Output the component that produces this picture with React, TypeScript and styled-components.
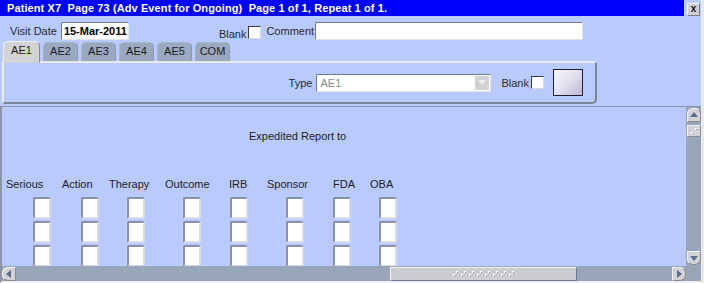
import styled, { createGlobalStyle } from 'styled-components';

const GlobalStyle = createGlobalStyle`
  html, body {
    margin: 0;
    padding: 0;
    background: #e9e9ec;
  }
  * {
    box-sizing: border-box;
  }
`;

const Window = styled.div`
  display: flex;
  flex-direction: column;
  width: 701px;
  height: 283px;
  background: #b9cafe;
  font-family: 'Liberation Sans', Arial, sans-serif;
  font-size: 11px;
  color: #222;
  overflow: hidden;
`;

const TitleRow = styled.div`
  display: flex;
  align-items: flex-start;
  height: 17px;
`;

const TitleBar = styled.div`
  flex: 1;
  height: 16px;
  line-height: 16px;
  padding-left: 7px;
  background: #0000ff;
  color: #fff;
  font-weight: bold;
  font-size: 11px;
  letter-spacing: 0.1px;
  white-space: pre;
`;

const CloseButton = styled.div`
  width: 13px;
  height: 13px;
  margin: 3px 1px 0 3px;
  background: #cfcfd4;
  border: 1px solid;
  border-color: #f4f4f4 #7a7a80 #7a7a80 #f4f4f4;
  font-size: 10px;
  font-weight: bold;
  line-height: 10px;
  text-align: center;
  color: #111;
`;

const HeaderRow = styled.div`
  display: flex;
  align-items: center;
  height: 18px;
  margin-top: 5px;
  padding-left: 10px;
`;

const Label = styled.span<{ $ml?: number; $mt?: number }>`
  margin-left: ${(p) => p.$ml ?? 0}px;
  margin-top: ${(p) => p.$mt ?? 0}px;
  color: #2a2a2a;
  white-space: nowrap;
`;

const TextBox = styled.div<{ $w: number; $ml?: number; $muted?: boolean }>`
  width: ${(p) => p.$w}px;
  height: 18px;
  margin-left: ${(p) => p.$ml ?? 0}px;
  padding-left: 2px;
  background: #fff;
  border: 1px solid;
  border-color: #6e7890 #e4e4e4 #e4e4e4 #6e7890;
  border-radius: 2px;
  line-height: 16px;
  font-size: 11px;
  color: ${(p) => (p.$muted ? '#8a8a8a' : '#000')};
  font-weight: ${(p) => (p.$muted ? 'normal' : 'bold')};
`;

const Check = styled.div<{ $ml?: number; $mt?: number }>`
  width: 13px;
  height: 13px;
  margin-left: ${(p) => p.$ml ?? 0}px;
  margin-top: ${(p) => p.$mt ?? 0}px;
  background: #fff;
  border: 1px solid;
  border-color: #3a3a3a #d8d8d8 #d8d8d8 #3a3a3a;
`;

const TabStrip = styled.div`
  display: flex;
  align-items: flex-end;
  gap: 3px;
  height: 21px;
  padding-left: 3px;
`;

const Tab = styled.div<{ $active?: boolean }>`
  width: ${(p) => (p.$active ? 37 : 35)}px;
  height: ${(p) => (p.$active ? 22 : 19)}px;
  margin-bottom: ${(p) => (p.$active ? -2 : 0)}px;
  background: ${(p) => (p.$active ? '#d3d3d6' : '#9aa8c0')};
  border: 1px solid;
  border-color: ${(p) => (p.$active ? '#f0f0f0 #8a8a8a transparent #f0f0f0' : '#a8b4c8 #8d9ab0 transparent #a8b4c8')};
  border-radius: 5px 5px 0 0;
  text-align: center;
  line-height: 17px;
  color: #1c1c1c;
  position: relative;
  z-index: ${(p) => (p.$active ? 2 : 0)};
`;

const Panel = styled.div`
  display: flex;
  align-items: center;
  justify-content: flex-end;
  width: 595px;
  height: 43px;
  margin-left: 2px;
  padding-right: 12px;
  border: 2px solid;
  border-color: #e8eaf2 #7c8596 #7c8596 #e8eaf2;
  border-radius: 0 4px 5px 3px;
`;

const Select = styled(TextBox)`
  position: relative;
  padding-left: 3px;
`;

const SelectArrow = styled.div`
  position: absolute;
  top: 1px;
  right: 1px;
  width: 14px;
  height: 14px;
  background: #d2d2d4;
  display: flex;
  align-items: center;
  justify-content: center;
`;

const ColorSwatch = styled.div`
  width: 30px;
  height: 27px;
  margin-left: 9px;
  border: 1px solid #1e1e2a;
  background: linear-gradient(135deg, #f7f6fc 0%, #e6e3f0 45%, #bdb5d0 100%);
`;

const ScrollArea = styled.div`
  flex: 1;
  display: grid;
  grid-template-columns: 1fr 15px;
  grid-template-rows: 1fr 15px;
  margin-top: 2px;
  border-top: 1px solid #8c95a6;
  border-left: 2px solid #8c95a6;
  border-bottom: 2px solid #eef0f6;
  min-height: 0;
`;

const Content = styled.div`
  overflow: hidden;
  padding-top: 23px;
`;

const SectionTitle = styled.div`
  padding-left: 247px;
  line-height: 13px;
  color: #222;
`;

const Columns = styled.div`
  display: flex;
  margin-top: 35px;
  padding-left: 4px;
`;

const Column = styled.div<{ $w?: number }>`
  display: flex;
  flex-direction: column;
  width: ${(p) => (p.$w ? `${p.$w}px` : 'auto')};
`;

const ColHeader = styled.div`
  line-height: 13px;
  height: 13px;
  color: #222;
  white-space: nowrap;
`;

const BoxStack = styled.div<{ $offset: number }>`
  display: flex;
  flex-direction: column;
  gap: 2px;
  margin-top: 6px;
  margin-left: ${(p) => p.$offset}px;
`;

const Box = styled.div`
  width: 18px;
  height: 22px;
  background: #fff;
  border: 2px solid;
  border-color: #8792a6 #d9dbe2 #d9dbe2 #8792a6;
  border-radius: 2px;
`;

const VScroll = styled.div`
  display: flex;
  flex-direction: column;
  align-items: center;
  background: #99a5b9;
  padding: 1px 0;
`;

const HScroll = styled.div`
  display: flex;
  align-items: center;
  background: #99a5b9;
`;

const Corner = styled.div`
  background: #99a5b9;
`;

const ArrowButton = styled.div<{ $dir: 'up' | 'down' | 'left' | 'right' }>`
  width: 14px;
  height: 14px;
  flex-shrink: 0;
  background: #d2d3d6;
  border: 1px solid;
  border-color: #f2f2f2 #8c8c90 #8c8c90 #f2f2f2;
  border-radius: ${(p) =>
    p.$dir === 'up' ? '6px 6px 1px 1px' : p.$dir === 'down' ? '1px 1px 6px 6px' : p.$dir === 'left' ? '6px 1px 1px 6px' : '1px 6px 6px 1px'};
  display: flex;
  align-items: center;
  justify-content: center;
`;

const Spacer = styled.div`
  flex: 1;
`;

const VThumb = styled.div`
  width: 14px;
  height: 12px;
  margin-top: 3px;
  background: #d2d3d6;
  border: 1px solid;
  border-color: #f2f2f2 #8c8c90 #8c8c90 #f2f2f2;
  display: flex;
  align-items: center;
  justify-content: center;
`;

const HThumb = styled.div`
  width: 187px;
  height: 14px;
  margin-left: 374px;
  background: #cbccd0;
  border: 1px solid;
  border-color: #f4f4f4 #6e7890 #6e7890 #f4f4f4;
  display: flex;
  align-items: center;
  justify-content: center;
`;

const Triangle = ({ dir }: { dir: 'up' | 'down' | 'left' | 'right' }) => {
  const pts = {
    up: '1,7 5,2 9,7',
    down: '1,3 9,3 5,8',
    left: '7,1 7,9 2,5',
    right: '3,1 3,9 8,5',
  }[dir];
  return (
    <svg width='10' height='10' viewBox='0 0 10 10'>
      <polygon points={pts} fill='#5a6c8c' />
    </svg>
  );
};

const Grip = ({ count, vertical }: { count: number; vertical?: boolean }) => (
  <svg width={vertical ? 8 : count * 8} height={vertical ? 8 : 6} viewBox={vertical ? '0 0 8 8' : `0 0 ${count * 8} 6`}>
    {vertical ? (
      <>
        <rect x='5' y='1' width='2' height='2' fill='#fff' />
        <rect x='1' y='5' width='2' height='2' fill='#fff' />
        <rect x='6' y='2' width='1' height='1' fill='#8a8a8a' />
        <rect x='2' y='6' width='1' height='1' fill='#8a8a8a' />
      </>
    ) : (
      Array.from({ length: count }).map((_, i) => (
        <g key={i}>
          <rect x={i * 8 + 4} y='0' width='2' height='2' fill='#fff' />
          <rect x={i * 8 + 1} y='3' width='2' height='2' fill='#fff' />
          <rect x={i * 8 + 5} y='1' width='1' height='1' fill='#8a8a8a' />
          <rect x={i * 8 + 2} y='4' width='1' height='1' fill='#8a8a8a' />
        </g>
      ))
    )}
  </svg>
);

const tabs = ['AE1', 'AE2', 'AE3', 'AE4', 'AE5', 'COM'];

const columns = [
  { label: 'Serious', width: 56, offset: 27 },
  { label: 'Action', width: 47, offset: 19 },
  { label: 'Therapy', width: 56, offset: 18 },
  { label: 'Outcome', width: 64, offset: 18 },
  { label: 'IRB', width: 38, offset: 1 },
  { label: 'Sponsor', width: 66, offset: 19 },
  { label: 'FDA', width: 37, offset: 0 },
  { label: 'OBA', width: 0, offset: 9 },
];

export default function App() {
  return (
    <>
      <GlobalStyle />
      <Window>
        <TitleRow>
          <TitleBar>{'Patient X7  Page 73 (Adv Event for Ongoing)  Page 1 of 1, Repeat 1 of 1.'}</TitleBar>
          <CloseButton>x</CloseButton>
        </TitleRow>

        <HeaderRow>
          <Label>Visit Date</Label>
          <TextBox $w={68} $ml={4}>15-Mar-2011</TextBox>
          <Label $ml={90} $mt={5}>Blank</Label>
          <Check $ml={2} $mt={3} />
          <Label $ml={5}>Comment</Label>
          <TextBox $w={268} $ml={1} />
        </HeaderRow>

        <TabStrip>
          {tabs.map((t, i) => (
            <Tab key={t} $active={i === 0}>{t}</Tab>
          ))}
        </TabStrip>

        <Panel>
          <Label>Type</Label>
          <Select $w={175} $ml={4} $muted>
            AE1
            <SelectArrow>
              <svg width='8' height='5' viewBox='0 0 8 5'>
                <polygon points='0,0 8,0 4,5' fill='#eeeeee' />
              </svg>
            </SelectArrow>
          </Select>
          <Label $ml={10}>Blank</Label>
          <Check $ml={2} />
          <ColorSwatch />
        </Panel>

        <ScrollArea>
          <Content>
            <SectionTitle>Expedited Report to</SectionTitle>
            <Columns>
              {columns.map((c) => (
                <Column key={c.label} $w={c.width || undefined}>
                  <ColHeader>{c.label}</ColHeader>
                  <BoxStack $offset={c.offset}>
                    <Box />
                    <Box />
                    <Box />
                  </BoxStack>
                </Column>
              ))}
            </Columns>
          </Content>
          <VScroll>
            <ArrowButton $dir='up'><Triangle dir='up' /></ArrowButton>
            <VThumb><Grip count={1} vertical /></VThumb>
            <Spacer />
            <ArrowButton $dir='down'><Triangle dir='down' /></ArrowButton>
          </VScroll>
          <HScroll>
            <ArrowButton $dir='left'><Triangle dir='left' /></ArrowButton>
            <HThumb><Grip count={8} /></HThumb>
            <Spacer />
            <ArrowButton $dir='right'><Triangle dir='right' /></ArrowButton>
          </HScroll>
          <Corner />
        </ScrollArea>
      </Window>
    </>
  );
}
